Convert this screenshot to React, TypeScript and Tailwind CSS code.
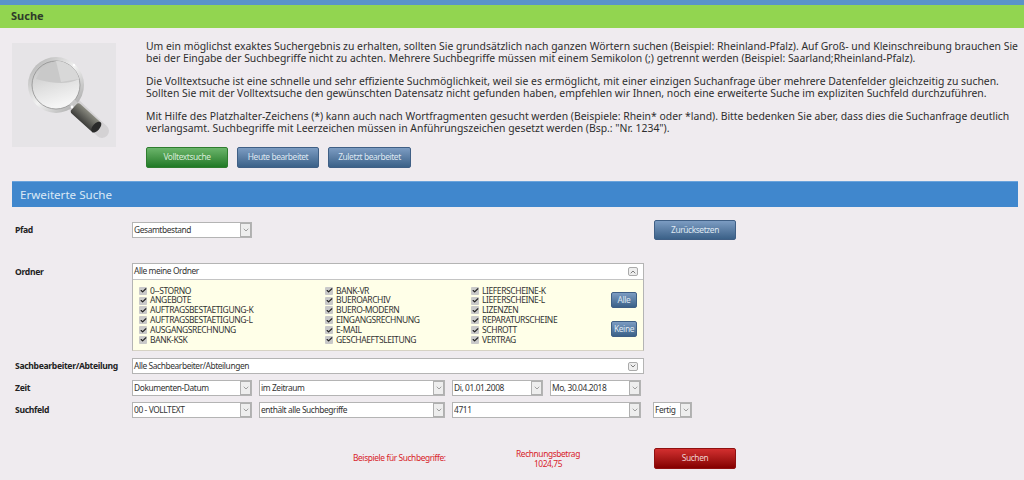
import React from 'react';
import { ChevronDown, ChevronUp, Check } from 'lucide-react';

const intro = [
  [
    'Um ein möglichst exaktes Suchergebnis zu erhalten, sollten Sie grundsätzlich nach ganzen Wörtern suchen (Beispiel: Rheinland-Pfalz). Auf Groß- und Kleinschreibung brauchen Sie',
    'bei der Eingabe der Suchbegriffe nicht zu achten. Mehrere Suchbegriffe müssen mit einem Semikolon (;) getrennt werden (Beispiel: Saarland;Rheinland-Pfalz).',
  ],
  [
    'Die Volltextsuche ist eine schnelle und sehr effiziente Suchmöglichkeit, weil sie es ermöglicht, mit einer einzigen Suchanfrage über mehrere Datenfelder gleichzeitig zu suchen.',
    'Sollten Sie mit der Volltextsuche den gewünschten Datensatz nicht gefunden haben, empfehlen wir Ihnen, noch eine erweiterte Suche im expliziten Suchfeld durchzuführen.',
  ],
  [
    'Mit Hilfe des Platzhalter-Zeichens (*) kann auch nach Wortfragmenten gesucht werden (Beispiele: Rhein* oder *land). Bitte bedenken Sie aber, dass dies die Suchanfrage deutlich',
    'verlangsamt. Suchbegriffe mit Leerzeichen müssen in Anführungszeichen gesetzt werden (Bsp.: "Nr. 1234").',
  ],
];

const folders = [
  ['0--STORNO', 'ANGEBOTE', 'AUFTRAGSBESTAETIGUNG-K', 'AUFTRAGSBESTAETIGUNG-L', 'AUSGANGSRECHNUNG', 'BANK-KSK'],
  ['BANK-VR', 'BUEROARCHIV', 'BUERO-MODERN', 'EINGANGSRECHNUNG', 'E-MAIL', 'GESCHAEFTSLEITUNG'],
  ['LIEFERSCHEINE-K', 'LIEFERSCHEINE-L', 'LIZENZEN', 'REPARATURSCHEINE', 'SCHROTT', 'VERTRAG'],
];

const btnBlue = 'flex items-center justify-center whitespace-nowrap rounded-[2px] border border-[#3f5f85] bg-gradient-to-b from-[#7c9cc2] to-[#3b6188] text-[8.4px] tracking-[-0.4px] text-[#dfe8f2]';

const Field = ({ text, className }: { text: string; className: string }) => (
  <div className={`flex h-[16px] items-center border border-[#b4b4b4] bg-white pl-[1px] ${className}`}>
    <span className="min-w-0 flex-1 overflow-hidden text-[8.4px] leading-[12px] tracking-[-0.4px] whitespace-nowrap text-[#333]">{text}</span>
    <span className="flex h-[14px] w-[11px] shrink-0 items-center justify-center border border-[#b0b0b0] bg-[#eeeeee] text-[#777]">
      <ChevronDown size={8} strokeWidth={2} />
    </span>
  </div>
);

const Label = ({ children }: { children: React.ReactNode }) => (
  <div className="w-[120px] shrink-0 text-[8.6px] font-bold tracking-[-0.33px] whitespace-nowrap text-[#222]">{children}</div>
);

const Box = () => (
  <span className="flex h-[8px] w-[8px] shrink-0 items-center justify-center rounded-[1px] bg-[#c9c9c9] text-[#222]">
    <Check size={7} strokeWidth={4} />
  </span>
);

const Magnifier = () => (
  <svg width="104" height="104" viewBox="0 0 104 104">
    <defs>
      <linearGradient id="lens" x1="0" y1="0" x2="0.3" y2="1">
        <stop offset="0" stopColor="#bdbdbd" />
        <stop offset="0.55" stopColor="#dedede" />
        <stop offset="1" stopColor="#f5f5f5" />
      </linearGradient>
      <linearGradient id="rim" x1="0" y1="0" x2="1" y2="1">
        <stop offset="0" stopColor="#a8a8a8" />
        <stop offset="0.5" stopColor="#f2f2f2" />
        <stop offset="1" stopColor="#9a9a9a" />
      </linearGradient>
      <linearGradient id="grip" x1="0" y1="0" x2="0" y2="1">
        <stop offset="0" stopColor="#8a8a80" />
        <stop offset="1" stopColor="#3c3c3a" />
      </linearGradient>
    </defs>
    <path d="M59 59 L90 88" stroke="#000" strokeOpacity="0.08" strokeWidth="14" strokeLinecap="round" />
    <circle cx="44" cy="42" r="28" fill="url(#rim)" />
    <circle cx="44" cy="42" r="24" fill="url(#lens)" stroke="#8f8f8f" strokeWidth="0.8" />
    <path d="M44 18 A24 24 0 0 1 67 36 Q52 44 24 36 Q30 22 44 18 Z" fill="#c9c9c9" />
    <path d="M44 18 A24 24 0 0 1 67 36 L49 39 Z" fill="#d8d8d8" />
    <path d="M60 59 L65 64" stroke="#c8c8c8" strokeWidth="7" />
    <g transform="translate(62 64) rotate(42)">
      <rect x="0" y="-6.5" width="31" height="13" rx="3" fill="url(#grip)" />
      <ellipse cx="30" cy="0" rx="3.5" ry="6.5" fill="#2a2a2a" />
    </g>
    <circle cx="62" cy="22" r="1.2" fill="#fff" />
    <circle cx="60" cy="64" r="1.4" fill="#fff" />
  </svg>
);

export default function App() {
  return (
    <div className="h-[480px] w-[1024px] overflow-hidden bg-[#efebef] font-['Noto_Sans',sans-serif] text-[#333]">
      <div className="h-[5px] bg-[#5a93c8]" />
      <div className="flex h-[23px] items-center bg-[#92d550] pl-[11px] text-[11px] font-bold text-[#2f3b2a]">Suche</div>

      <div className="flex px-[12px] pt-[12px]">
        <div className="mt-[3px] h-[104px] w-[104px] shrink-0 bg-[#e6e4e7]">
          <Magnifier />
        </div>
        <div className="ml-[30px]">
          <div className="flex flex-col gap-[11px] text-[10.4px] leading-[12px] whitespace-nowrap text-[#2e2e2e]">
            {intro.map((p, i) => (
              <p key={i}>
                {p[0]}
                <br />
                {p[1]}
              </p>
            ))}
          </div>
          <div className="mt-[13px] flex gap-[9px]">
            <div className="flex h-[21px] w-[82px] items-center justify-center rounded-[2px] border border-[#2f7d2f] bg-gradient-to-b from-[#6bb56b] to-[#1f7a26] text-[8.4px] tracking-[-0.4px] text-[#d8ecd8]">Volltextsuche</div>
            <div className={`${btnBlue} h-[21px] w-[82px]`}>Heute bearbeitet</div>
            <div className={`${btnBlue} h-[21px] w-[83px]`}>Zuletzt bearbeitet</div>
          </div>
        </div>
      </div>

      <div className="mt-[13px] ml-[12px] flex h-[26px] w-[1006px] items-center border-t border-[#6aa3dc] bg-[#4087cd] pl-[8px] text-[11.6px] text-[#dbe9f6]">Erweiterte Suche</div>

      <div className="pl-[15px]">
        <div className="mt-[13px] flex h-[20px] items-center">
          <Label>Pfad</Label>
          <Field text="Gesamtbestand" className="-ml-[3px] w-[120px]" />
          <div className={`${btnBlue} ml-[402px] h-[20px] w-[82px]`}>Zurücksetzen</div>
        </div>

        <div className="mt-[23px] flex">
          <div className="flex h-[18px] items-center"><Label>Ordner</Label></div>
          <div className="-ml-[3px] h-[88px] w-[512px] border border-[#b4b4b4] border-b-[#d6d2c4] bg-[#ffffe8]">
            <div className="flex h-[16px] items-center justify-between border-b border-[#c4c4c4] bg-white pr-[5px] pl-[1px] text-[8.4px] tracking-[-0.4px] text-[#333]">
              <span>Alle meine Ordner</span>
              <span className="flex h-[9px] w-[10px] items-center justify-center rounded-[2px] border border-[#aaa] bg-[#eee] text-[#666]"><ChevronUp size={8} strokeWidth={2.5} /></span>
            </div>
            <div className="relative pt-[6px] pl-[6px]">
              <div className="flex">
                {folders.map((col, i) => (
                  <div key={i} className={i === 0 ? 'w-[186px]' : 'w-[146px]'}>
                    {col.map(f => (
                      <div key={f} className="flex h-[9.8px] items-center gap-[3px] text-[8.5px] leading-none tracking-[-0.4px] whitespace-nowrap text-[#333]">
                        <Box />
                        {f}
                      </div>
                    ))}
                  </div>
                ))}
              </div>
              <div className={`${btnBlue} absolute top-[12px] left-[478px] h-[16px] w-[26px]`}>Alle</div>
              <div className={`${btnBlue} absolute top-[41px] left-[478px] h-[16px] w-[26px]`}>Keine</div>
            </div>
          </div>
        </div>

        <div className="mt-[7px] flex items-center">
          <Label>Sachbearbeiter/Abteilung</Label>
          <div className="-ml-[3px] flex h-[16px] w-[512px] items-center justify-between border border-[#b4b4b4] bg-white pr-[5px] pl-[1px] text-[8.4px] tracking-[-0.4px] text-[#333]">
            <span>Alle Sachbearbeiter/Abteilungen</span>
            <span className="flex h-[9px] w-[10px] items-center justify-center rounded-[2px] border border-[#aaa] bg-[#eee] text-[#666]"><ChevronDown size={8} strokeWidth={2.5} /></span>
          </div>
        </div>

        <div className="mt-[6px] flex items-center">
          <Label>Zeit</Label>
          <div className="-ml-[3px] flex gap-[7px]">
            <Field text="Dokumenten-Datum" className="w-[120px]" />
            <Field text="im Zeitraum" className="w-[186px]" />
            <Field text="Di, 01.01.2008" className="w-[91px]" />
            <Field text="Mo, 30.04.2018" className="w-[91px]" />
          </div>
        </div>

        <div className="mt-[6px] flex items-center">
          <Label>Suchfeld</Label>
          <div className="-ml-[3px] flex gap-[7px]">
            <Field text="00 - VOLLTEXT" className="w-[120px]" />
            <Field text="enthält alle Suchbegriffe" className="w-[186px]" />
            <Field text="4711" className="w-[189px]" />
            <Field text="Fertig" className="ml-[5px] w-[39px]" />
          </div>
        </div>

        <div className="mt-[30px] flex items-center text-[8.4px] tracking-[-0.4px] text-[#d8232a]">
          <div className="ml-[338px] w-[100px] whitespace-nowrap">Beispiele für Suchbegriffe:</div>
          <div className="ml-[47px] w-[96px] text-center leading-[10px]">Rechnungsbetrag<br />1024,75</div>
          <div className="ml-[58px] flex h-[21px] w-[82px] items-center justify-center rounded-[2px] border border-[#8f1010] bg-gradient-to-b from-[#d32f2f] to-[#840000] text-[#f0d0d0]">Suchen</div>
        </div>
      </div>
    </div>
  );
}
